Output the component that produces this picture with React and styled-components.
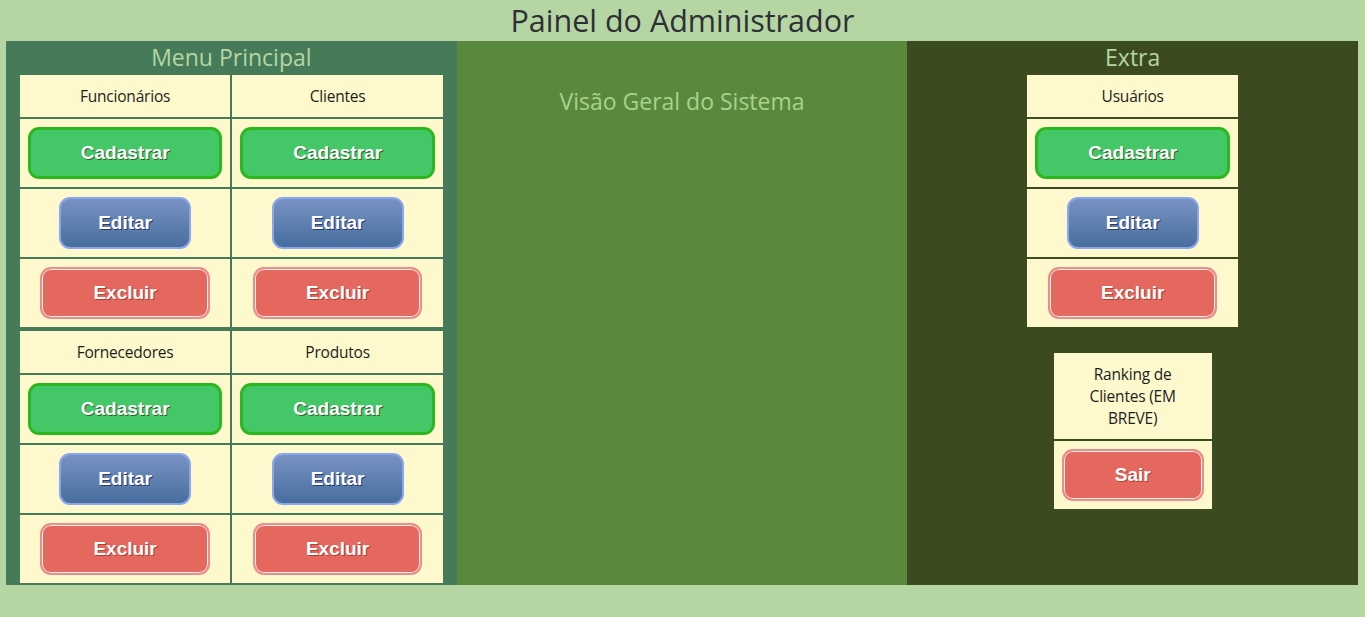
import React from 'react'
import styled, { createGlobalStyle } from 'styled-components'

const GlobalStyle = createGlobalStyle`
  body {
    margin: 0;
    background-color: #b5d6a3;
    font-family: "Open Sans", "Liberation Sans", sans-serif;
  }
`;

const Header = styled.h1`
  margin: 0;
  height: 41px;
  line-height: 41px;
  font-size: 30.5px;
  font-weight: 400;
  color: #2e2f36;
  text-align: center;
`;

const Main = styled.div`
  display: flex;
  margin: 0 7px 0 6px;
`;

const Panel = styled.section`
  flex: 1;
  display: flex;
  flex-direction: column;
  align-items: center;
  background-color: ${props => props.bg};
  padding-top: ${props => props.top || 0}px;
`;

const PanelTitle = styled.h2`
  margin: 0;
  height: 32px;
  line-height: 32px;
  font-size: 23px;
  font-weight: 400;
  color: #b5d6a3;
`;

const Table = styled.table`
  border-spacing: 2px;
  margin-top: ${props => props.gap || 0}px;
  ${props => props.full && 'width: 427px; table-layout: fixed;'}
`;

const HeadCell = styled.td`
  background-color: #fef9cd;
  padding: 10px;
  font-size: 15.5px;
  letter-spacing: -0.2px;
  line-height: 22px;
  color: #1d1d1d;
  text-align: center;
`;

const Cell = styled.td`
  background-color: #fef9cd;
  padding: 8px;
  text-align: center;
`;

const Btn = styled.button`
  font-family: "Liberation Sans", Arial, sans-serif;
  font-weight: bold;
  font-size: 19px;
  line-height: 22px;
  color: #fff;
  border-radius: 11px;
  cursor: pointer;
`;

const Cadastrar = styled(Btn)`
  width: 100%;
  padding: 12px 50px;
  background-color: #44c767;
  border: 3px solid #2bb81f;
  text-shadow: 1px 1px 0 #2f6627;
`;

const Editar = styled(Btn)`
  padding: 13px 37px;
  background: linear-gradient(to bottom, #7892c2, #476e9e);
  border: 2px solid #8ba6ec;
  text-shadow: 1px 1px 0 #283966;
`;

const Excluir = styled(Btn)`
  padding: 13px 51px;
  background-color: #e4685d;
  border: 2px solid #ee8c86;
  box-shadow: inset 0 0 0 1px #fff4f2;
  text-shadow: 1px 1px 0 #b23e35;
`;

const Overview = styled.h2`
  margin: 0;
  font-size: 23px;
  font-weight: 400;
  line-height: 33px;
  color: #a9d28e;
`;

const Pair = ({ left, right }) => (
  <Table full>
    <tbody>
      <tr>
        <HeadCell>{left}</HeadCell>
        <HeadCell>{right}</HeadCell>
      </tr>
      <tr>
        <Cell><Cadastrar>Cadastrar</Cadastrar></Cell>
        <Cell><Cadastrar>Cadastrar</Cadastrar></Cell>
      </tr>
      <tr>
        <Cell><Editar>Editar</Editar></Cell>
        <Cell><Editar>Editar</Editar></Cell>
      </tr>
      <tr>
        <Cell><Excluir>Excluir</Excluir></Cell>
        <Cell><Excluir>Excluir</Excluir></Cell>
      </tr>
    </tbody>
  </Table>
)

const App = () => {
  return (
    <>
      <GlobalStyle />
      <Header>Painel do Administrador</Header>
      <Main>
        <Panel bg="#467b5a">
          <PanelTitle>Menu Principal</PanelTitle>
          <Pair left="Funcionários" right="Clientes" />
          <Pair left="Fornecedores" right="Produtos" />
        </Panel>
        <Panel bg="#5a893d" top={44}>
          <Overview>Visão Geral do Sistema</Overview>
        </Panel>
        <Panel bg="#3c4b1f">
          <PanelTitle>Extra</PanelTitle>
          <Table>
            <tbody>
              <tr><HeadCell>Usuários</HeadCell></tr>
              <tr><Cell><Cadastrar>Cadastrar</Cadastrar></Cell></tr>
              <tr><Cell><Editar>Editar</Editar></Cell></tr>
              <tr><Cell><Excluir>Excluir</Excluir></Cell></tr>
            </tbody>
          </Table>
          <Table gap={22}>
            <tbody>
              <tr><HeadCell>Ranking de<br />Clientes (EM<br />BREVE)</HeadCell></tr>
              <tr><Cell><Excluir>Sair</Excluir></Cell></tr>
            </tbody>
          </Table>
        </Panel>
      </Main>
    </>
  )
}
export default App
